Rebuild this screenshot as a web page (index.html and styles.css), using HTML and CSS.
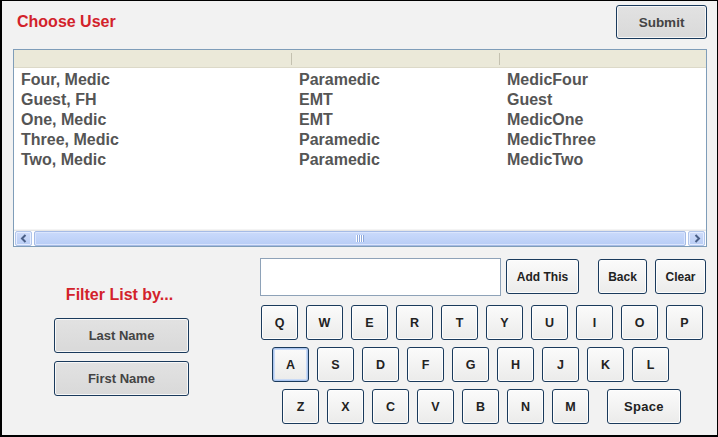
FILE: index.html
```html
<!DOCTYPE html>
<html>
<head>
<meta charset="utf-8">
<link rel="stylesheet" href="styles.css">
</head>
<body>
<div class="frame">
  <div class="top">
    <div class="title">Choose User</div>
    <button class="btn gray submit">Submit</button>
  </div>
  <div class="table">
    <div class="thead">
      <div class="th c1"></div>
      <div class="th c2"></div>
      <div class="th c3"></div>
    </div>
    <div class="tbody">
      <div class="tr"><span class="c1">Four, Medic</span><span class="c2">Paramedic</span><span class="c3">MedicFour</span></div>
      <div class="tr"><span class="c1">Guest, FH</span><span class="c2">EMT</span><span class="c3">Guest</span></div>
      <div class="tr"><span class="c1">One, Medic</span><span class="c2">EMT</span><span class="c3">MedicOne</span></div>
      <div class="tr"><span class="c1">Three, Medic</span><span class="c2">Paramedic</span><span class="c3">MedicThree</span></div>
      <div class="tr"><span class="c1">Two, Medic</span><span class="c2">Paramedic</span><span class="c3">MedicTwo</span></div>
    </div>
    <div class="hsep"></div>
    <div class="hscroll">
      <div class="sbtn"><svg width="8" height="9" viewBox="0 0 8 9"><path d="M5.5 1 L2 4.5 L5.5 8" fill="none" stroke="#4a5f86" stroke-width="2"/></svg></div>
      <div class="thumb"><span class="grip"></span></div>
      <div class="sbtn"><svg width="8" height="9" viewBox="0 0 8 9"><path d="M2.5 1 L6 4.5 L2.5 8" fill="none" stroke="#4a5f86" stroke-width="2"/></svg></div>
    </div>
  </div>
  <div class="bottom">
    <div class="left">
      <div class="filter">Filter List by...</div>
      <button class="btn gray name first">Last Name</button>
      <button class="btn gray name">First Name</button>
    </div>
    <div class="right">
      <div class="inrow">
        <div class="input"></div>
        <button class="btn key addthis">Add This</button>
        <button class="btn key back">Back</button>
        <button class="btn key clear">Clear</button>
      </div>
      <div class="krow r1">
        <button class="btn key k">Q</button><button class="btn key k">W</button><button class="btn key k">E</button><button class="btn key k">R</button><button class="btn key k">T</button><button class="btn key k">Y</button><button class="btn key k">U</button><button class="btn key k">I</button><button class="btn key k">O</button><button class="btn key k">P</button>
      </div>
      <div class="krow r2">
        <button class="btn key k focus">A</button><button class="btn key k">S</button><button class="btn key k">D</button><button class="btn key k">F</button><button class="btn key k">G</button><button class="btn key k">H</button><button class="btn key k">J</button><button class="btn key k">K</button><button class="btn key k">L</button>
      </div>
      <div class="krow r3">
        <button class="btn key k">Z</button><button class="btn key k">X</button><button class="btn key k">C</button><button class="btn key k">V</button><button class="btn key k">B</button><button class="btn key k">N</button><button class="btn key k">M</button><button class="btn key space">Space</button>
      </div>
    </div>
  </div>
</div>
</body>
</html>
```

FILE: styles.css
```css
* { box-sizing: border-box; }
html, body { margin: 0; padding: 0; }
body { font-family: "Liberation Sans", Arial, sans-serif; }

.frame {
  width: 718px;
  height: 437px;
  background: #f2f2f2;
  border-style: solid;
  border-color: #000;
  border-width: 1px 1px 2px 2px;
  display: flex;
  flex-direction: column;
}

.top {
  display: flex;
  justify-content: space-between;
  align-items: flex-start;
  padding: 4px 10px 0 15px;
  height: 48px;
}
.title {
  margin-top: 7px;
  color: #d3222b;
  font-weight: bold;
  font-size: 16px;
  line-height: 20px;
}

.btn {
  font-family: "Liberation Sans", Arial, sans-serif;
  font-weight: bold;
  padding: 0;
  margin: 0;
  border: 1px solid #1a3a5c;
  border-radius: 3px;
  display: flex;
  align-items: center;
  justify-content: center;
}
.gray {
  background: linear-gradient(#e2e2e2, #d9d9d9);
  color: #444;
  box-shadow: inset 0 0 0 1px #f7f7f7;
}
.submit {
  width: 91px;
  height: 34px;
  font-size: 13.5px;
}

.table {
  margin: 0 10px 0 11px;
  height: 198px;
  border: 1px solid #7f9db9;
  background: #fff;
  display: flex;
  flex-direction: column;
}
.thead {
  height: 18px;
  flex: none;
  background: #ebe9d9;
  border-bottom: 1px solid #dcd9c8;
  display: flex;
  align-items: center;
}
.th { height: 12px; }
.c1 { width: 278px; flex: none; }
.c2 { width: 208px; flex: none; }
.c3 { flex: 1; }
.th.c1, .th.c2 { border-right: 1px solid #c4c1b0; }

.tbody {
  flex: 1;
  padding-top: 2px;
}
.tr {
  display: flex;
  height: 20px;
  line-height: 20px;
  font-size: 16px;
  font-weight: bold;
  color: #555;
}
.tr span { padding-left: 7px; }

.hsep {
  height: 2px;
  flex: none;
  background: #e6e6e6;
  border-top: 1px solid #f4f4f4;
}
.hscroll {
  height: 15px;
  flex: none;
  display: flex;
  gap: 1px;
  padding: 0 1px;
}
.sbtn {
  width: 17px;
  height: 15px;
  flex: none;
  background: linear-gradient(#cfdcfa, #b9cdf4);
  border: 1px solid #b1c5ea;
  border-radius: 2px;
  box-shadow: inset 0 0 0 1px #e6eeff;
  display: flex;
  align-items: center;
  justify-content: center;
}
.thumb {
  flex: 1;
  margin: 0 1px 0 1px;
  background: linear-gradient(#cadafb, #b8cdf6);
  border: 1px solid #a5bbe6;
  border-radius: 2px;
  box-shadow: inset 0 0 0 1px #dae5fd;
  display: flex;
  align-items: center;
  justify-content: center;
}
.grip {
  width: 8px;
  height: 7px;
  background: repeating-linear-gradient(90deg, #ffffff 0 1px, #8ea9dc 1px 2px);
}

.bottom {
  flex: 1;
  display: flex;
}
.left {
  width: 239px;
  flex: none;
  display: flex;
  flex-direction: column;
  align-items: center;
  padding-top: 38px;
}
.filter {
  color: #d3222b;
  font-weight: bold;
  font-size: 16px;
  line-height: 20px;
  padding-right: 4px;
}
.name {
  width: 135px;
  height: 35px;
  font-size: 13px;
  margin-top: 8px;
}
.name.first { margin-top: 13px; }

.right {
  flex: 1;
  padding-top: 11px;
}
.inrow {
  display: flex;
  align-items: flex-start;
  margin-left: 19px;
}
.input {
  width: 241px;
  height: 38px;
  background: #fff;
  border: 1px solid #8ea2b8;
}
.key {
  background: linear-gradient(#fbfbfb, #ebebea);
  color: #222;
  height: 35px;
  font-size: 12.5px;
  box-shadow: inset 0 0 0 1px #fdfdfd;
}
.addthis { width: 73px; margin: 1px 0 0 5px; font-size: 12px; }
.back { width: 49px; margin: 1px 0 0 19px; font-size: 12px; }
.clear { width: 51px; margin: 1px 0 0 8px; font-size: 12px; }

.krow {
  display: flex;
  gap: 8px;
}
.k { width: 37px; }
.r1 { margin: 9px 0 0 20px; }
.r2 { margin: 7px 0 0 31px; }
.r3 { margin: 7px 0 0 41px; }
.focus {
  box-shadow: inset 0 0 0 1px #a9c4ee, inset 0 0 0 2px #c9daf5;
}
.space {
  width: 74px;
  margin-left: 10px;
  font-size: 13px;
  letter-spacing: 0.3px;
}
```
